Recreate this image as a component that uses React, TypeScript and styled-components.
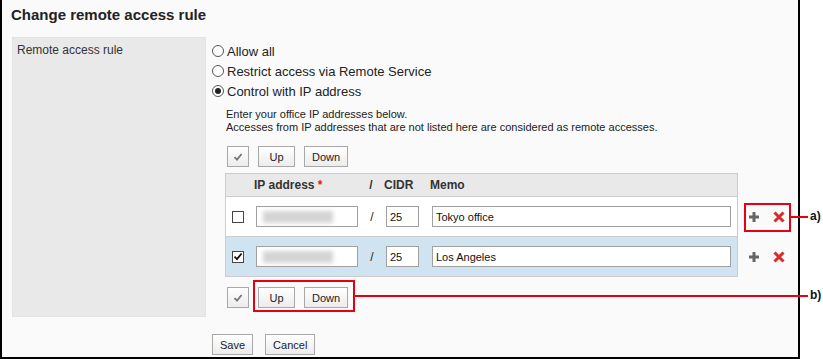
import * as React from "react";
import styled, { createGlobalStyle } from "styled-components";

const GlobalStyle = createGlobalStyle`
  body {
    margin: 0;
    background: #fff;
    font-family: "Liberation Sans", Arial, sans-serif;
    color: #222;
  }
`;

const Page = styled.div`
  position: relative;
  width: 823px;
  height: 359px;
  overflow: hidden;
`;

const Frame = styled.div`
  box-sizing: border-box;
  width: 800px;
  height: 359px;
  background: #fafafa;
  border-left: 2px solid #000;
  border-right: 2px solid #000;
  border-bottom: 2px solid #000;
`;

const Title = styled.h1`
  margin: 0 0 13px;
  padding: 6px 0 0 9px;
  font-size: 15px;
  line-height: 18px;
  font-weight: bold;
  color: #222;
`;

const FormRow = styled.div`
  display: flex;
  margin-left: 10px;
`;

const LabelCell = styled.div`
  box-sizing: border-box;
  width: 194px;
  height: 280px;
  padding: 4px 4px;
  background: #e9e9e9;
  border: 1px solid #e3e3e3;
  font-size: 12px;
  line-height: 16px;
  color: #333;
`;

const ValueCell = styled.div`
  padding: 4px 0 9px 6px;
`;

const RadioRow = styled.label`
  display: flex;
  align-items: center;
  gap: 3px;
  height: 20px;
  font-size: 13px;
  color: #222;
`;

const Radio = styled.span<{ $checked?: boolean }>`
  box-sizing: border-box;
  width: 12px;
  height: 12px;
  border-radius: 50%;
  border: 1px solid #555;
  background: #fff;
  display: flex;
  align-items: center;
  justify-content: center;
  &::after {
    content: "";
    width: 6px;
    height: 6px;
    border-radius: 50%;
    background: ${(p) => (p.$checked ? "#222" : "transparent")};
  }
`;

const Description = styled.p`
  margin: 7px 0 0 14px;
  font-size: 11px;
  line-height: 13px;
  color: #222;
`;

const Toolbar = styled.div<{ $top: number }>`
  display: flex;
  gap: 9px;
  margin: ${(p) => p.$top}px 0 0 15px;
`;

const Button = styled.button`
  box-sizing: border-box;
  height: 21px;
  min-width: 37px;
  padding: 0 7px;
  border: 1px solid #a8a8a8;
  background: linear-gradient(#ffffff, #ececec);
  font-family: "Liberation Sans", Arial, sans-serif;
  font-size: 11px;
  color: #222;
  border-radius: 0;
`;

const CheckButton = styled(Button)`
  min-width: 0;
  width: 22px;
  padding: 0;
  display: flex;
  align-items: center;
  justify-content: center;
`;

const Table = styled.div`
  margin: 6px 0 0 13px;
`;

const Line = styled.div`
  display: flex;
`;

const Cells = styled.div<{ $kind: "head" | "row" | "selected" }>`
  box-sizing: border-box;
  width: 513px;
  height: ${(p) => (p.$kind === "head" ? 24 : 40)}px;
  display: grid;
  grid-template-columns: 30px 102px 28px 46px 299px;
  align-items: center;
  background: ${(p) =>
    p.$kind === "head" ? "#e9e9e9" : p.$kind === "selected" ? "#cfe3f1" : "#fff"};
  border: 1px solid #cccccc;
  border-top-width: ${(p) => (p.$kind === "head" ? 1 : 0)}px;
`;

const HeadText = styled.span<{ $center?: boolean }>`
  font-size: 12px;
  font-weight: bold;
  color: #333;
  margin-left: -2px;
  text-align: ${(p) => (p.$center ? "center" : "left")};
`;

const Required = styled.span`
  color: #e02020;
`;

const CheckBox = styled.span`
  box-sizing: border-box;
  width: 12px;
  height: 12px;
  margin-left: 6px;
  border: 1px solid #444;
  background: #fff;
  display: flex;
  align-items: center;
  justify-content: center;
`;

const Input = styled.div<{ $width: number }>`
  box-sizing: border-box;
  width: ${(p) => p.$width}px;
  height: 21px;
  border: 1px solid #a0a0a0;
  background: #fff;
  padding: 0 3px;
  display: flex;
  align-items: center;
  font-size: 11px;
  color: #111;
`;

const Blurred = styled.span`
  width: 70px;
  height: 12px;
  margin-left: 3px;
  background: #d4d4d4;
  filter: blur(2px);
`;

const Slash = styled.span`
  font-size: 12px;
  text-align: center;
  color: #222;
`;

const Actions = styled.div`
  display: flex;
  align-items: center;
  gap: 13px;
  padding-left: 10px;
`;

const FormButtons = styled.div`
  display: flex;
  gap: 12px;
  margin: 17px 0 0 210px;
`;

const CalloutBox = styled.div`
  position: absolute;
  box-sizing: border-box;
  border: 2px solid #e60012;
`;

const CalloutLine = styled.div`
  position: absolute;
  height: 2px;
  background: #e60012;
`;

const CalloutText = styled.span`
  position: absolute;
  font-size: 12px;
  font-weight: bold;
  line-height: 14px;
  color: #111;
`;

const Tick = ({ color = "#777", size = 10 }: { color?: string; size?: number }) => (
  <svg width={size} height={size} viewBox="0 0 10 10">
    <path d="M1.5 5.2 L4 7.6 L8.6 2" fill="none" stroke={color} strokeWidth="1.8" />
  </svg>
);

const PlusIcon = () => (
  <svg width="12" height="12" viewBox="0 0 12 12">
    <path d="M6 1 V11 M1 6 H11" stroke="#666" strokeWidth="3" />
  </svg>
);

const DeleteIcon = () => (
  <svg width="12" height="12" viewBox="0 0 12 12">
    <path d="M1.5 1.5 L10.5 10.5 M10.5 1.5 L1.5 10.5" stroke="#d92b2b" strokeWidth="3" />
  </svg>
);

const rows = [
  { memo: "Tokyo office", cidr: "25", checked: false },
  { memo: "Los Angeles", cidr: "25", checked: true },
];

function App() {
  return (
    <Page>
      <GlobalStyle />
      <Frame>
        <Title>Change remote access rule</Title>
        <FormRow>
          <LabelCell>Remote access rule</LabelCell>
          <ValueCell>
            <RadioRow>
              <Radio /> Allow all
            </RadioRow>
            <RadioRow>
              <Radio /> Restrict access via Remote Service
            </RadioRow>
            <RadioRow>
              <Radio $checked /> Control with IP address
            </RadioRow>
            <Description>
              Enter your office IP addresses below.
              <br />
              Accesses from IP addresses that are not listed here are considered as remote accesses.
            </Description>
            <Toolbar $top={12}>
              <CheckButton>
                <Tick />
              </CheckButton>
              <Button>Up</Button>
              <Button>Down</Button>
            </Toolbar>
            <Table>
              <Line>
                <Cells $kind="head">
                  <span />
                  <HeadText>
                    IP address <Required>*</Required>
                  </HeadText>
                  <HeadText $center>/</HeadText>
                  <HeadText>CIDR</HeadText>
                  <HeadText>Memo</HeadText>
                </Cells>
              </Line>
              {rows.map((r) => (
                <Line key={r.memo}>
                  <Cells $kind={r.checked ? "selected" : "row"}>
                    <CheckBox>{r.checked && <Tick color="#111" size={11} />}</CheckBox>
                    <Input $width={102}>
                      <Blurred />
                    </Input>
                    <Slash>/</Slash>
                    <Input $width={33}>{r.cidr}</Input>
                    <Input $width={299}>{r.memo}</Input>
                  </Cells>
                  <Actions>
                    <PlusIcon />
                    <DeleteIcon />
                  </Actions>
                </Line>
              ))}
            </Table>
            <Toolbar $top={10}>
              <CheckButton>
                <Tick />
              </CheckButton>
              <Button>Up</Button>
              <Button>Down</Button>
            </Toolbar>
          </ValueCell>
        </FormRow>
        <FormButtons>
          <Button>Save</Button>
          <Button>Cancel</Button>
        </FormButtons>
      </Frame>

      <CalloutBox style={{ left: 744, top: 203, width: 47, height: 29 }} />
      <CalloutLine style={{ left: 790, top: 216, width: 18 }} />
      <CalloutText style={{ left: 810, top: 209 }}>a)</CalloutText>

      <CalloutBox style={{ left: 253, top: 280, width: 102, height: 32 }} />
      <CalloutLine style={{ left: 354, top: 295, width: 454 }} />
      <CalloutText style={{ left: 810, top: 288 }}>b)</CalloutText>
    </Page>
  );
}

export default App;
